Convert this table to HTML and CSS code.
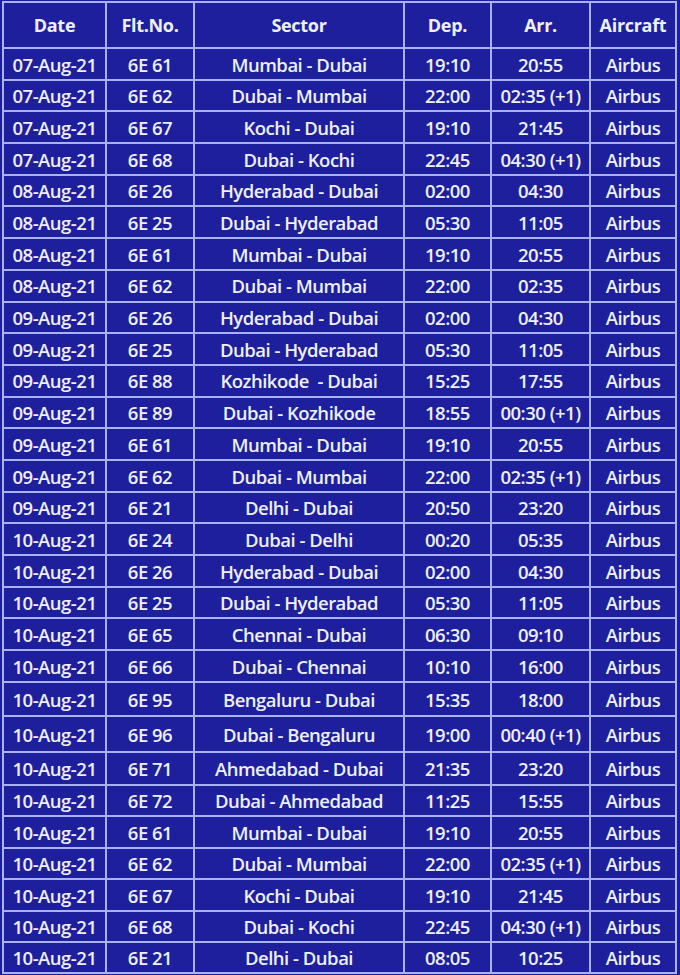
FILE: index.html
```html
<!DOCTYPE html>
<html lang="en">
<head>
<meta charset="utf-8">
<title>Flight Schedule</title>
<link rel="stylesheet" href="styles.css">
</head>
<body>
<div class="schedule">
  <div class="cell head">Date</div><div class="cell head">Flt.No.</div><div class="cell head">Sector</div><div class="cell head">Dep.</div><div class="cell head">Arr.</div><div class="cell head">Aircraft</div>

  <div class="cell">07-Aug-21</div><div class="cell">6E 61</div><div class="cell">Mumbai - Dubai</div><div class="cell">19:10</div><div class="cell">20:55</div><div class="cell">Airbus</div>
  <div class="cell">07-Aug-21</div><div class="cell">6E 62</div><div class="cell">Dubai - Mumbai</div><div class="cell">22:00</div><div class="cell">02:35 (+1)</div><div class="cell">Airbus</div>
  <div class="cell">07-Aug-21</div><div class="cell">6E 67</div><div class="cell">Kochi - Dubai</div><div class="cell">19:10</div><div class="cell">21:45</div><div class="cell">Airbus</div>
  <div class="cell">07-Aug-21</div><div class="cell">6E 68</div><div class="cell">Dubai - Kochi</div><div class="cell">22:45</div><div class="cell">04:30 (+1)</div><div class="cell">Airbus</div>
  <div class="cell">08-Aug-21</div><div class="cell">6E 26</div><div class="cell">Hyderabad - Dubai</div><div class="cell">02:00</div><div class="cell">04:30</div><div class="cell">Airbus</div>
  <div class="cell">08-Aug-21</div><div class="cell">6E 25</div><div class="cell">Dubai - Hyderabad</div><div class="cell">05:30</div><div class="cell">11:05</div><div class="cell">Airbus</div>
  <div class="cell">08-Aug-21</div><div class="cell">6E 61</div><div class="cell">Mumbai - Dubai</div><div class="cell">19:10</div><div class="cell">20:55</div><div class="cell">Airbus</div>
  <div class="cell">08-Aug-21</div><div class="cell">6E 62</div><div class="cell">Dubai - Mumbai</div><div class="cell">22:00</div><div class="cell">02:35</div><div class="cell">Airbus</div>
  <div class="cell">09-Aug-21</div><div class="cell">6E 26</div><div class="cell">Hyderabad - Dubai</div><div class="cell">02:00</div><div class="cell">04:30</div><div class="cell">Airbus</div>
  <div class="cell">09-Aug-21</div><div class="cell">6E 25</div><div class="cell">Dubai - Hyderabad</div><div class="cell">05:30</div><div class="cell">11:05</div><div class="cell">Airbus</div>
  <div class="cell">09-Aug-21</div><div class="cell">6E 88</div><div class="cell">Kozhikode &nbsp;- Dubai</div><div class="cell">15:25</div><div class="cell">17:55</div><div class="cell">Airbus</div>
  <div class="cell">09-Aug-21</div><div class="cell">6E 89</div><div class="cell">Dubai - Kozhikode</div><div class="cell">18:55</div><div class="cell">00:30 (+1)</div><div class="cell">Airbus</div>
  <div class="cell">09-Aug-21</div><div class="cell">6E 61</div><div class="cell">Mumbai - Dubai</div><div class="cell">19:10</div><div class="cell">20:55</div><div class="cell">Airbus</div>
  <div class="cell">09-Aug-21</div><div class="cell">6E 62</div><div class="cell">Dubai - Mumbai</div><div class="cell">22:00</div><div class="cell">02:35 (+1)</div><div class="cell">Airbus</div>
  <div class="cell">09-Aug-21</div><div class="cell">6E 21</div><div class="cell">Delhi - Dubai</div><div class="cell">20:50</div><div class="cell">23:20</div><div class="cell">Airbus</div>
  <div class="cell">10-Aug-21</div><div class="cell">6E 24</div><div class="cell">Dubai - Delhi</div><div class="cell">00:20</div><div class="cell">05:35</div><div class="cell">Airbus</div>
  <div class="cell">10-Aug-21</div><div class="cell">6E 26</div><div class="cell">Hyderabad - Dubai</div><div class="cell">02:00</div><div class="cell">04:30</div><div class="cell">Airbus</div>
  <div class="cell">10-Aug-21</div><div class="cell">6E 25</div><div class="cell">Dubai - Hyderabad</div><div class="cell">05:30</div><div class="cell">11:05</div><div class="cell">Airbus</div>
  <div class="cell">10-Aug-21</div><div class="cell">6E 65</div><div class="cell">Chennai - Dubai</div><div class="cell">06:30</div><div class="cell">09:10</div><div class="cell">Airbus</div>
  <div class="cell">10-Aug-21</div><div class="cell">6E 66</div><div class="cell">Dubai - Chennai</div><div class="cell">10:10</div><div class="cell">16:00</div><div class="cell">Airbus</div>
  <div class="cell">10-Aug-21</div><div class="cell">6E 95</div><div class="cell">Bengaluru - Dubai</div><div class="cell">15:35</div><div class="cell">18:00</div><div class="cell">Airbus</div>
  <div class="cell">10-Aug-21</div><div class="cell">6E 96</div><div class="cell">Dubai - Bengaluru</div><div class="cell">19:00</div><div class="cell">00:40 (+1)</div><div class="cell">Airbus</div>
  <div class="cell">10-Aug-21</div><div class="cell">6E 71</div><div class="cell">Ahmedabad - Dubai</div><div class="cell">21:35</div><div class="cell">23:20</div><div class="cell">Airbus</div>
  <div class="cell">10-Aug-21</div><div class="cell">6E 72</div><div class="cell">Dubai - Ahmedabad</div><div class="cell">11:25</div><div class="cell">15:55</div><div class="cell">Airbus</div>
  <div class="cell">10-Aug-21</div><div class="cell">6E 61</div><div class="cell">Mumbai - Dubai</div><div class="cell">19:10</div><div class="cell">20:55</div><div class="cell">Airbus</div>
  <div class="cell">10-Aug-21</div><div class="cell">6E 62</div><div class="cell">Dubai - Mumbai</div><div class="cell">22:00</div><div class="cell">02:35 (+1)</div><div class="cell">Airbus</div>
  <div class="cell">10-Aug-21</div><div class="cell">6E 67</div><div class="cell">Kochi - Dubai</div><div class="cell">19:10</div><div class="cell">21:45</div><div class="cell">Airbus</div>
  <div class="cell">10-Aug-21</div><div class="cell">6E 68</div><div class="cell">Dubai - Kochi</div><div class="cell">22:45</div><div class="cell">04:30 (+1)</div><div class="cell">Airbus</div>
  <div class="cell">10-Aug-21</div><div class="cell">6E 21</div><div class="cell">Delhi - Dubai</div><div class="cell">08:05</div><div class="cell">10:25</div><div class="cell">Airbus</div>
</div>
</body>
</html>
```

FILE: styles.css
```css
html, body {
  margin: 0;
  padding: 0;
  background: #1d1f9c;
  overflow: hidden;
}

body {
  font-family: "Open Sans", "Noto Sans", sans-serif;
  color: #eef0ff;
}

.schedule {
  display: grid;
  grid-template-columns: 101px 86px 208px 85px 97px 84px;
  grid-template-rows: 44px repeat(20, 29.7px) 32px 34px 31.3px repeat(6, 29.4px);
  gap: 2px;
  padding: 2px;
  width: max-content;
  margin: 1px 0 0 2px;
  background: #a9b2f2;
}

.cell {
  background: #1d1f9c;
  display: flex;
  align-items: center;
  justify-content: center;
  white-space: nowrap;
  padding-top: 2px;
  font-size: 18.5px;
  font-weight: 600;
  letter-spacing: -0.5px;
  line-height: 1;
}

.head {
  padding-top: 0;
  font-size: 18px;
  font-weight: 700;
  letter-spacing: -0.3px;
}
```
